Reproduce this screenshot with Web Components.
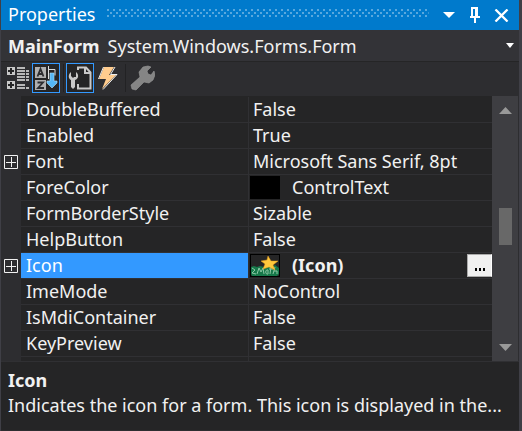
<!DOCTYPE html>
<html lang="en">
<head>
<meta charset="utf-8">
<title>Properties</title>
<style>
html, body { height: 100%; margin: 0; background: #2d2d30; }
body { font: 18px/26px "Noto Sans", "Open Sans", sans-serif; color: #f1f1f1; }
</style>
</head>
<body>
<properties-panel></properties-panel>

<template id="panel-t">
<style>
:host { display: flex; flex-direction: column; height: 100%; box-sizing: border-box; border-left: 1px solid #3f3f46; border-right: 3px solid #3f3f46; background: #2d2d30; overflow: hidden; }
.grid { flex: 1; min-height: 0; display: flex; padding-right: 1px; border-bottom: 1px solid #303033; }
.rows { flex: 1; min-width: 0; overflow: hidden; padding-top: 1px; background: linear-gradient(90deg, #2d2d30 20px, #252526 20px); }
</style>
<panel-title>Properties</panel-title>
<object-picker><b slot="name">MainForm</b>System.Windows.Forms.Form</object-picker>
<panel-toolbar></panel-toolbar>
<div class="grid">
<div class="rows" role="list">
<property-row name="DoubleBuffered">False</property-row>
<property-row name="Enabled">True</property-row>
<property-row name="Font" expandable>Microsoft Sans Serif, 8pt</property-row>
<property-row name="ForeColor"><color-swatch slot="preview"></color-swatch>ControlText</property-row>
<property-row name="FormBorderStyle">Sizable</property-row>
<property-row name="HelpButton">False</property-row>
<property-row name="Icon" expandable selected><icon-preview slot="preview"></icon-preview><b>(Icon)</b></property-row>
<property-row name="ImeMode">NoControl</property-row>
<property-row name="IsMdiContainer">False</property-row>
<property-row name="KeyPreview">False</property-row>
<property-row name=""></property-row>
</div>
<scroll-rail></scroll-rail>
</div>
<property-help><b slot="title">Icon</b>Indicates the icon for a form. This icon is displayed in the...</property-help>
</template>

<template id="title-t">
<style>
:host { display: flex; align-items: center; flex: none; height: 30px; padding: 0 5px 0 7px; background: #007acc; color: #fff; line-height: 26px; }
svg { display: block; }
.title { padding-bottom: 2px; }
.grip { flex: 1; min-width: 0; height: 9px; margin: 0 7px 4px 12px; }
button { border: 0; padding: 0; margin: 0; background: none; color: inherit; width: 26px; height: 26px; display: grid; place-items: center; }
</style>
<span class="title"><slot></slot></span>
<svg class="grip" aria-hidden="true"><defs><pattern id="d" width="6" height="6" patternUnits="userSpaceOnUse"><path d="M0 0h2v2H0zM3 3h2v2H3z" fill="#59a8de"/></pattern></defs><rect width="100%" height="9" fill="url(#d)"/></svg>
<button aria-label="Window position"><svg width="12" height="6"><path d="M0 0h12L6 6z" fill="#fff"/></svg></button>
<button aria-label="Auto hide"><svg width="12" height="18"><path d="M2 1h7v9h2v2H7v5H5v-5H1v-2h1zM4 3v7h2V3z" fill="#fff" fill-rule="evenodd"/></svg></button>
<button aria-label="Close"><svg width="15" height="13"><path d="M1.500.5l12 12M13.500.5l-12 12" stroke="#fff" stroke-width="2.300"/></svg></button>
</template>

<template id="picker-t">
<style>
:host { display: block; flex: none; }
button { display: flex; align-items: center; width: 100%; height: 32px; padding: 0 5px 0 7px; margin: 0; border: 0; border-bottom: 1px solid #252526; background: #333337; color: inherit; font: inherit; text-align: left; }
.text { flex: 1; display: flex; gap: 8px; white-space: nowrap; overflow: hidden; }
</style>
<button aria-haspopup="listbox"><span class="text"><slot name="name"></slot><span><slot></slot></span></span><svg width="8" height="5" aria-hidden="true"><path d="M0 0h8L4 5z" fill="#fff"/></svg></button>
</template>

<template id="toolbar-t">
<style>
:host { display: flex; flex: none; align-items: center; height: 32px; padding: 0 3px 2px; }
button { box-sizing: border-box; width: 28px; height: 30px; padding: 0; margin: 0; border: 1px solid transparent; background: none; display: grid; place-items: center; }
button[aria-pressed=true] { border-color: #3399ff; background: #252526; }
i { width: 1px; height: 28px; margin: 0 2px 0 3px; background: #222224; }
svg { display: block; }
</style>
<button aria-label="Categorized"><svg width="24" height="24"><path d="M1 1h8v8H1zM1 15h8v8H1z" fill="#c8c8c8"/><path d="M5 2v6M2 5h6M5 16v6M2 19h6" stroke="#252526" stroke-width="2"/><path d="M11 2h8M11 5h8M11 8h8M11 11h8M11 14h8M11 19h8M11 22h8M20 5h3M20 8h3M20 11h3M20 14h3M20 22h3" stroke="#b8b8b8" stroke-width="2"/></svg></button>
<button aria-label="Alphabetical" aria-pressed="true"><svg width="24" height="24"><path d="M1 1h11v11H1zM1 14h11v10H1z" fill="#b0b0b0"/><path d="M3.500 10.500L6.500 3l3 7.500M5 8h4M3.500 16.500H9L4 22h6" fill="none" stroke="#2d2d30" stroke-width="1.800"/><path d="M14.500 0v13M14 3.500h7v6" fill="none" stroke="#ddd"/><path d="M16 7h4v8h3v2l-5 5-5-5v-2h3z" fill="#55b7f5" stroke="#b4dffa" stroke-width=".6"/></svg></button>
<i></i>
<button aria-label="Properties" aria-pressed="true"><svg width="24" height="24"><path d="M10 4V1.500h8l4.500 5V22.500H10V18M17 1.500V7h5" fill="none" stroke="#c8c8c8" stroke-width="2"/><path d="M3 6C0 8 0 13 3 14v7l2 2 2-2v-7c4-1 4-6 1-8v5H6l-1 1-2-2z" fill="#c8c8c8"/></svg></button>
<button aria-label="Events"><svg width="24" height="24"><path d="M8 1h10l-5 8h7L6 23l4-10H3z" fill="#ffcc8e"/><path d="M19 1l-4.500 7.500H21L7 23.500M7.500 1L2.500 13" fill="none" stroke="#eee"/></svg></button>
<i></i>
<button aria-label="Property pages" disabled><svg width="26" height="26"><path d="M14 2l5-1 3 1-4 4 1 3 3 1 3-4 1 4-2 5-4 3-5-1-8 8-4-1-1-4 9-8-1-5z" fill="#858585" stroke="#999" stroke-width=".6"/></svg></button>
</template>

<template id="row-t">
<style>
:host { display: grid; grid-template-columns: 20px 227px 1px minmax(0, 1fr); height: 26px; line-height: 25px; white-space: nowrap; }
.exp, .name, .value { box-sizing: border-box; height: 26px; }
.exp { display: flex; align-items: flex-start; padding: 6px 0 0 3px; margin: 0; border: 0; background: none; }
.exp svg { display: block; }
.name { padding-left: 5px; border-bottom: 1px solid #303033; }
.bar { background: #303033; height: 26px; }
.value { display: flex; align-items: center; padding-left: 4px; border-bottom: 1px solid #303033; }
slot[name=preview]::slotted(*) { margin: 0 12px 0 -3px; }
:host([selected]) .name { background: linear-gradient(#3399ff, #3399ff) padding-box; color: #fff; }
.more { margin: 0 0 0 auto; width: 25px; height: 23px; padding: 0; box-sizing: border-box; border: 1px solid #aaa; border-right-color: #fff; background: #f0f0f0; color: #000; display: grid; place-items: center; }
</style>
<span></span><span class="name"></span><span class="bar"></span><span class="value"><slot name="preview"></slot><slot></slot></span>
</template>

<template id="rail-t">
<style>
:host { display: flex; flex-direction: column; flex: none; width: 26px; background: #3e3e42; align-items: center; }
button { border: 0; margin: 0; padding: 0; background: none; width: 26px; height: 28px; display: grid; place-items: center; }
.track { flex: 1; display: grid; grid-template-rows: 84fr 37fr 88fr; width: 13px; }
.thumb { grid-row: 2; background: #686868; }
</style>
<button aria-label="Scroll up"><svg width="13" height="7"><path d="M0 7h13L6.500 0z" fill="#999"/></svg></button>
<div class="track"><div class="thumb"></div></div>
<button aria-label="Scroll down"><svg width="13" height="7"><path d="M0 0h13L6.500 7z" fill="#999"/></svg></button>
</template>

<template id="help-t">
<style>
:host { display: block; flex: none; height: 69px; padding: 6px 8px 0 7px; box-sizing: border-box; background: #252526; line-height: 25px; border-bottom: 1px solid #2d2d30; }
p { margin: 0; overflow: hidden; white-space: nowrap; }
</style>
<p><slot name="title"></slot></p><p><slot></slot></p>
</template>

<script>
class Base extends HTMLElement {
  constructor() {
    super();
    const t = document.getElementById(this.constructor.template);
    this.attachShadow({ mode: 'open' }).append(t.content.cloneNode(true));
  }
}
class PropertyRow extends Base {
  static template = 'row-t';
  connectedCallback() {
    const root = this.shadowRoot;
    this.setAttribute('role', 'listitem');
    root.querySelector('.name').textContent = this.getAttribute('name');
    if (this.hasAttribute('expandable')) {
      const b = document.createElement('button');
      b.className = 'exp';
      b.setAttribute('aria-label', 'Expand ' + this.getAttribute('name'));
      b.innerHTML = '<svg width="14" height="14"><path d="M.5.5h13v13H.5zM2 7.500h10M7.500 2v10" fill="none" stroke="#f1f1f1"/></svg>';
      root.querySelector('span').replaceWith(b);
    }
    if (this.hasAttribute('selected')) {
      const b = document.createElement('button');
      b.className = 'more';
      b.setAttribute('aria-label', 'Edit');
      b.innerHTML = '<svg width="12" height="12"><path d="M1 8h2v3H1zM5 8h2v3H5zM9 8h2v3H9z"/></svg>';
      root.querySelector('.value').append(b);
    }
  }
}
class ColorSwatch extends HTMLElement {
  constructor() {
    super();
    this.attachShadow({ mode: 'open' }).innerHTML = '<style>:host{display:block;width:30px;height:23px;background:#000}</style>';
  }
}
class IconPreview extends HTMLElement {
  constructor() {
    super();
    this.attachShadow({ mode: 'open' }).innerHTML = `<style>:host{display:block;box-sizing:border-box;width:30px;height:23px;border:1px solid #000}svg{display:block}</style>
<svg width="28" height="21"><path d="M0 12l3-1 3 1 3-1 4 1 4-1 4 1 3-2 4 3v6l-2 2H1l-1-2z" fill="#16784a"/><path d="M1 13l3 2-3 3 4 1M6 19l2-6 2 4 2-4 1 6M17 15c-3-1-3 5 0 4v-4M20 12l-1 7M18 14h4M24 12l-2 7M23 16l3 0v3" fill="none" stroke="#8cc8a5"/><path d="M17 1l3 5 7 0-5 4 2 5-6-3-6 2 2-5-4-3 6-1z" fill="#ffc83c" stroke="#e29b1c" stroke-width=".5"/></svg>`;
  }
}
const define = (tag, template) => customElements.define(tag, class extends Base { static template = template; });
customElements.define('color-swatch', ColorSwatch);
customElements.define('icon-preview', IconPreview);
customElements.define('property-row', PropertyRow);
define('panel-title', 'title-t');
define('object-picker', 'picker-t');
define('panel-toolbar', 'toolbar-t');
define('scroll-rail', 'rail-t');
define('property-help', 'help-t');
define('properties-panel', 'panel-t');
</script>
</body>
</html>
